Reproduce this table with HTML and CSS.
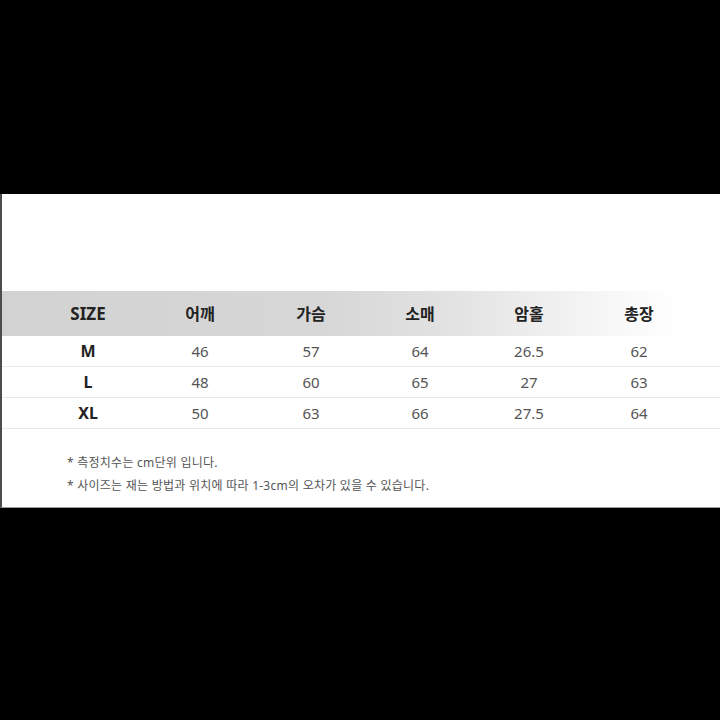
FILE: index.html
```html
<!DOCTYPE html>
<html lang="ko">
<head>
<meta charset="utf-8">
<link rel="stylesheet" href="styles.css">
</head>
<body>
<div class="panel">
  <div class="row head">
    <div class="cell">SIZE</div>
    <div class="cell">어깨</div>
    <div class="cell">가슴</div>
    <div class="cell">소매</div>
    <div class="cell">암홀</div>
    <div class="cell">총장</div>
  </div>
  <div class="row">
    <div class="cell label">M</div>
    <div class="cell">46</div>
    <div class="cell">57</div>
    <div class="cell">64</div>
    <div class="cell">26.5</div>
    <div class="cell">62</div>
  </div>
  <div class="row">
    <div class="cell label">L</div>
    <div class="cell">48</div>
    <div class="cell">60</div>
    <div class="cell">65</div>
    <div class="cell">27</div>
    <div class="cell">63</div>
  </div>
  <div class="row">
    <div class="cell label">XL</div>
    <div class="cell">50</div>
    <div class="cell">63</div>
    <div class="cell">66</div>
    <div class="cell">27.5</div>
    <div class="cell">64</div>
  </div>
  <div class="notes">
    <p>* 측정치수는 cm단위 입니다.</p>
    <p>* 사이즈는 재는 방법과 위치에 따라 1-3cm의 오차가 있을 수 있습니다.</p>
  </div>
</div>
</body>
</html>
```

FILE: styles.css
```css
html, body {
  margin: 0;
  padding: 0;
  background: #000;
  height: 720px;
  overflow: hidden;
}

body {
  padding-top: 194px;
  box-sizing: border-box;
  font-family: "Noto Sans", "Noto Sans CJK KR", sans-serif;
}

.panel {
  background: #fff;
  height: 314px;
  box-sizing: border-box;
  padding-top: 97px;
  border-left: 2px solid #4c4c4c;
  border-bottom: 1px solid #9a9a9a;
}

.row {
  display: grid;
  grid-template-columns: 112px 112px 110px 108px 110px 110px;
  padding-left: 30px;
  height: 31px;
  align-items: center;
  border-bottom: 1px solid #e9e9e9;
  box-sizing: border-box;
  color: #555;
  font-size: 15px;
}

.row.head {
  height: 45px;
  border-bottom: none;
  background: linear-gradient(to right, #d2d2d2 0%, #d7d7d7 45%, #e2e2e2 62%, #efefef 76%, #f8f8f8 86%, #ffffff 94%);
  color: #222;
  font-weight: 700;
  font-size: 16px;
}

.cell {
  text-align: center;
  line-height: 1;
}

.head .cell:first-child {
  font-size: 17px;
}

.cell.label {
  color: #222;
  font-weight: 700;
  font-size: 16px;
}

.notes {
  padding-left: 65px;
  margin-top: 22px;
  color: #555;
  font-size: 12px;
  letter-spacing: 0.25px;
}

.notes p {
  margin: 0;
  line-height: 23px;
}
```
